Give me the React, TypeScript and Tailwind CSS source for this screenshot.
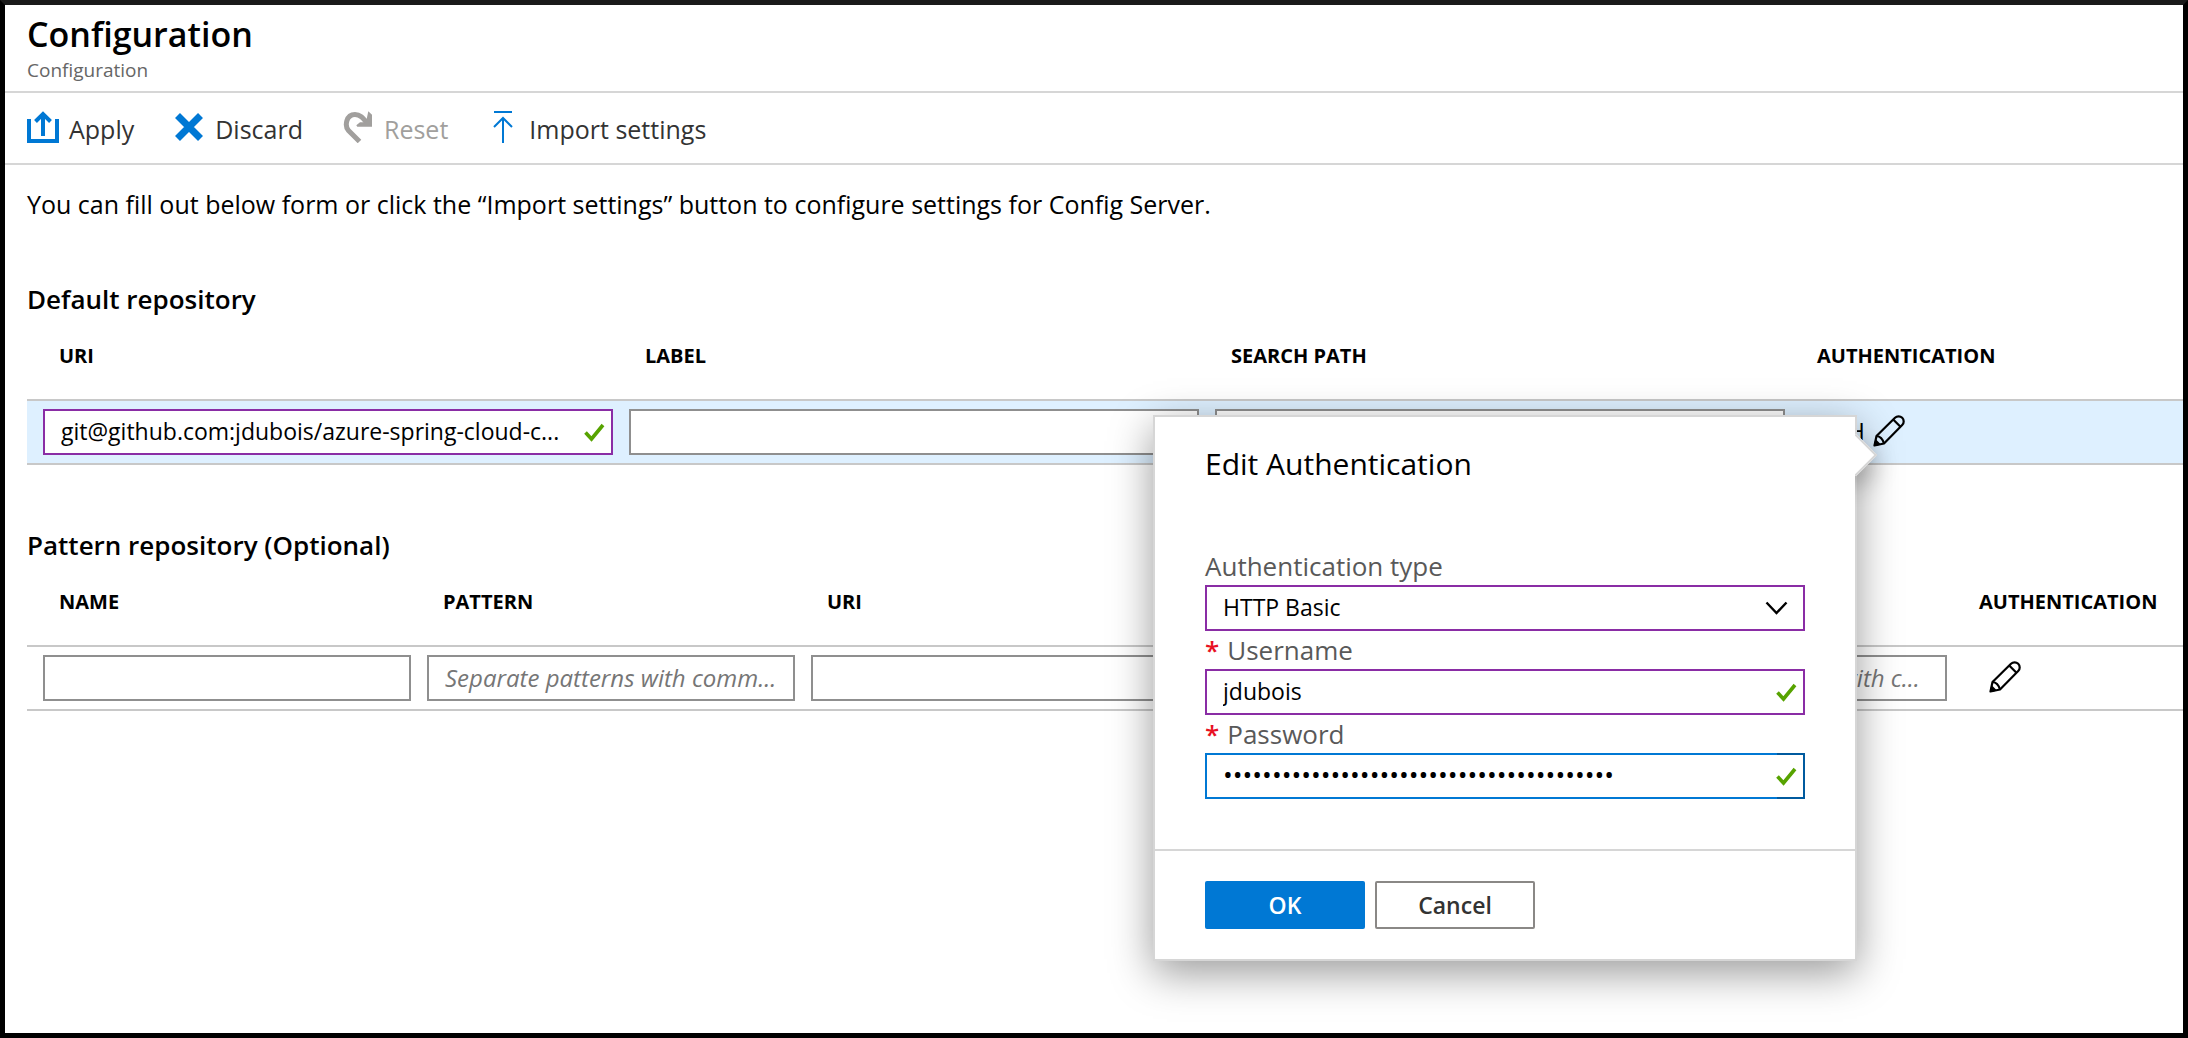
import React from "react";

function Check() {
  return (
    <svg aria-hidden="true" className="pointer-events-none absolute right-2 top-1/2 h-5 w-[22px] -translate-y-1/2" viewBox="0 0 22 20" fill="none">
      <path d="M2.5 10.5 L8.500 17 L20 3" stroke="#57a300" strokeWidth="3.6" />
    </svg>
  );
}

function Pencil() {
  return (
    <svg aria-hidden="true" className="block size-8" viewBox="0 0 32 32" fill="none" stroke="#000" strokeWidth="2.2" strokeLinejoin="round">
      <path d="M1.5 30.5 L3.5 21 L22 2.8 A5 5 0 0 1 29.2 10 L11 28.5 Z" />
      <path d="M3.5 21 Q9 21.5 11 28.5" />
      <path d="M20.5 4.8 L27.2 11.5" />
      <path d="M2 30 L3 26 L6 29 Z" fill="#000" />
    </svg>
  );
}

const box = "block h-[46px] w-full border-2 bg-white pl-4 leading-7 text-black outline-none";
const purple = box + " border-[#8a2da5] pr-8 pb-0.5 text-[23px]";
const gray = box + " border-[#8f8f8f] pr-4 pb-0.5 text-2xl placeholder:italic placeholder:text-[#767676]";
const table = "w-full table-fixed border-separate border-spacing-0";
const th = "px-6 pb-1.5 text-left align-middle text-xl leading-7 font-bold text-black";
const row = "h-[66px] [&>td]:border-y-2 [&>td]:border-[#c8c8c8]";

export default function App() {
  return (
    <div className="flex min-h-screen flex-col border-5 border-black border-t-[#1a1a1a] bg-white font-['Open_Sans','Noto_Sans',sans-serif] text-black">
      <header className="flex h-[88px] flex-col border-b-2 border-[#d6d6d6] px-[22px] pt-[7px]">
        <h1 className="text-[34px] leading-[44px] font-semibold">Configuration</h1>
        <p className="text-[19px] leading-7 text-[#666]">Configuration</p>
      </header>
      <div role="toolbar" aria-label="Configuration actions" className="flex h-[72px] items-center gap-[39px] border-b-2 border-[#d6d6d6] px-[22px] pb-0.5 text-[25px] leading-8 text-[#333]">
        <button className="flex items-center gap-2.5">
          <svg aria-hidden="true" className="size-8" viewBox="0 0 32 32" fill="none" stroke="#0078d4" strokeWidth="4">
            <path d="M2 8V30H30V8" />
            <path d="M16 25V3M8.500 10.500L16 3L23.500 10.500" />
          </svg>
          <span className="pt-1">Apply</span>
        </button>
        <button className="flex items-center gap-2.5">
          <svg aria-hidden="true" className="size-8" viewBox="0 0 32 32" fill="none" stroke="#0078d4">
            <path d="M4.500 4.500L27.500 27.500M27.500 4.500L4.500 27.500" strokeWidth="7" />
          </svg>
          <span className="pt-1">Discard</span>
        </button>
        <button disabled className="flex items-center gap-2.5 text-[#a19f9d]">
          <svg aria-hidden="true" className="size-8" viewBox="0 0 32 32" fill="none">
            <path d="M17.500 30.500 L6.500 19.500 C2.500 15 4 3.500 13 3.500 C18.500 3.500 21 7 26 13" stroke="#a19f9d" strokeWidth="5" />
            <path d="M26.300 0.300L30 3.700V15.700H15.300L14.300 14.300L18 11.200H24Z" fill="#a19f9d" />
          </svg>
          <span className="pt-1">Reset</span>
        </button>
        <button className="flex items-center gap-2.5">
          <svg aria-hidden="true" className="size-8" viewBox="0 0 32 32" fill="none" stroke="#0078d4" strokeWidth="2">
            <path d="M7 1H25M16 32V7M7 16L16 7L25 16" />
          </svg>
          <span className="pt-1">Import settings</span>
        </button>
      </div>
      <main className="pl-[22px]">
        <p className="pt-6 text-[25px] leading-[30px]">You can fill out below form or click the “Import settings” button to configure settings for Config Server.</p>

        <section className="pt-[60px]">
          <h2 className="text-[26px] leading-10 font-semibold">Default repository</h2>
          <table className={table}>
            <colgroup><col className="w-2" /><col /><col /><col /><col className="w-[390px]" /></colgroup>
            <thead>
              <tr className="h-20">
                <td />
                <th className={th}>URI</th><th className={th}>LABEL</th><th className={th}>SEARCH PATH</th><th className={th}>AUTHENTICATION</th>
              </tr>
            </thead>
            <tbody>
              <tr className={row + " bg-[#def0ff]"}>
                <td />
                <td className="px-2">
                  <div className="relative">
                    <input aria-label="URI" defaultValue="git@github.com:jdubois/azure-spring-cloud-c..." className={purple} />
                    <Check />
                  </div>
                </td>
                <td className="px-2"><input aria-label="Label" className={gray} /></td>
                <td className="px-2"><input aria-label="Search path" className={gray} /></td>
                <td className="pb-0.5 pl-7">
                  <div className="flex items-center gap-2 text-2xl leading-7">
                    <span>SSH</span>
                    <div className="relative">
                      <button aria-label="Edit authentication" className="block"><Pencil /></button>
                      <AuthDialog />
                    </div>
                  </div>
                </td>
              </tr>
            </tbody>
          </table>
        </section>

        <section className="pt-[60px]">
          <h2 className="text-[26px] leading-10 font-semibold">Pattern repository (Optional)</h2>
          <table className={table}>
            <colgroup><col className="w-2" /><col /><col /><col /><col /><col /><col className="w-[228px]" /></colgroup>
            <thead>
              <tr className="h-20">
                <td />
                <th className={th}>NAME</th><th className={th}>PATTERN</th><th className={th}>URI</th><th className={th}>LABEL</th><th className={th}>SEARCH PATH</th><th className={th}>AUTHENTICATION</th>
              </tr>
            </thead>
            <tbody>
              <tr className={row}>
                <td />
                <td className="px-2"><input aria-label="Name" className={gray} /></td>
                <td className="px-2"><input aria-label="Pattern" placeholder="Separate patterns with comm..." className={gray} /></td>
                <td className="px-2"><input aria-label="Pattern URI" className={gray} /></td>
                <td className="px-2"><input aria-label="Pattern label" className={gray} /></td>
                <td className="px-2"><input aria-label="Pattern search path" placeholder="Separate search paths with c..." className={gray} /></td>
                <td className="pb-0.5 pl-[34px]"><button aria-label="Edit pattern authentication" className="block"><Pencil /></button></td>
              </tr>
            </tbody>
          </table>
        </section>
      </main>
    </div>
  );
}

function AuthDialog() {
  return (
    <div role="dialog" aria-label="Edit Authentication" className="absolute top-0 right-full z-10 mr-4 w-[704px] border-2 border-[#d6d6d6] bg-white shadow-[0_12px_40px_rgba(0,0,0,0.4)]">
      <div aria-hidden="true" className="absolute top-[23px] -right-4 size-[30px] rotate-45 border-t-2 border-r-2 border-[#d6d6d6] bg-white shadow-[8px_8px_24px_rgba(0,0,0,0.3)]" />
      <div className="relative bg-white px-[50px] pt-[26px] pb-[50px] text-[26px] leading-[38px] text-[#595959]">
        <h3 className="mb-[62px] text-[30px] leading-[42px] text-black">Edit Authentication</h3>
        <label htmlFor="type" className="block">Authentication type</label>
        <div className="relative">
          <select id="type" className={purple + " appearance-none"}><option>HTTP Basic</option></select>
          <svg aria-hidden="true" className="pointer-events-none absolute top-4 right-4 h-3.5 w-6" viewBox="0 0 24 14" fill="none" stroke="#000" strokeWidth="2.4"><path d="M1.500 1.500L11.500 12L21.500 1.500" /></svg>
        </div>
        <label htmlFor="user" className="flex gap-2"><span className="font-semibold text-[#e81123]">*</span>Username</label>
        <div className="relative">
          <input id="user" defaultValue="jdubois" className={purple} />
          <Check />
        </div>
        <label htmlFor="pass" className="flex gap-2"><span className="font-semibold text-[#e81123]">*</span>Password</label>
        <div className="relative">
          <input id="pass" type="password" defaultValue="0123456789012345678901234567890123456789" className={box + " border-[#0078d4] pr-8 pb-1 text-[26px]"} />
          <span aria-hidden="true" className="pointer-events-none absolute inset-y-0 right-0 w-7 border-y-2 border-r-2 border-[#005a9e]" />
          <Check />
        </div>
      </div>
      <div className="flex gap-2.5 border-t-2 border-[#d6d6d6] px-[50px] py-[30px] text-[23px] font-semibold">
        <button className="h-12 w-40 rounded-xs bg-[#0078d4] text-white">OK</button>
        <button className="h-12 w-40 rounded-xs border-2 border-[#8a8886] bg-white text-[#333]">Cancel</button>
      </div>
    </div>
  );
}
